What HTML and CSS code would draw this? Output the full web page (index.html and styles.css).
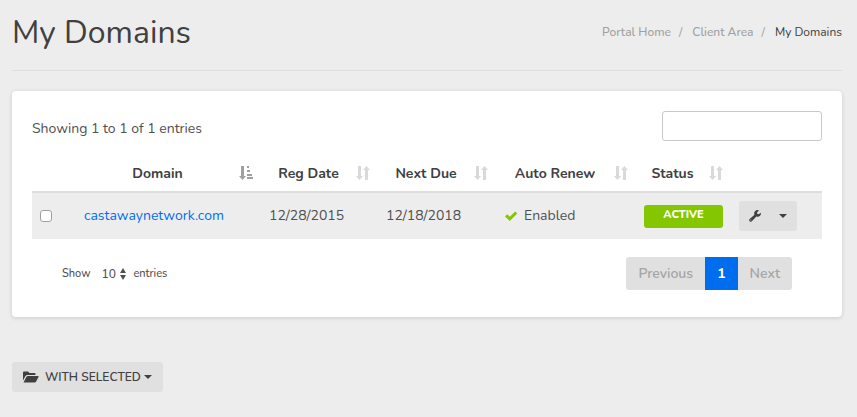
FILE: index.html
```html
<!DOCTYPE html>
<html lang="en">
<head>
    <meta charset="UTF-8">
    <meta name="viewport" content="width=device-width, initial-scale=1.0">
    <title>My Domains</title>
    <link rel="stylesheet" href="styles.css">
</head>
<body>
    <svg class="symbols" aria-hidden="true">
        <symbol id="icon-sort" viewBox="0 0 14 16">
            <path d="M2 1h3v10h2l-3.500 4L0 11h2zM9 15V5H7l3.500-4L14 5h-2v10z"/>
        </symbol>
        <symbol id="icon-sort-asc" viewBox="0 0 14 16">
            <path d="M2 1h3v10h2l-3.500 4L0 11h2zM8 1h2v2H8zM8 5h3v2H8zM8 9h5v2H8zM8 12h6v2H8z"/>
        </symbol>
    </svg>

    <header class="page-header">
        <h1>My Domains</h1>
        <nav class="breadcrumb">
            <a href="#">Portal Home</a>
            <span class="divider">/</span>
            <a href="#">Client Area</a>
            <span class="divider">/</span>
            <span class="current">My Domains</span>
        </nav>
    </header>

    <main>
        <section class="card">
            <div class="card-top">
                <p>Showing 1 to 1 of 1 entries</p>
                <input type="search" class="search" aria-label="Search domains">
            </div>

            <table class="domains">
                <colgroup>
                    <col class="col-check">
                    <col>
                    <col class="col-reg">
                    <col class="col-due">
                    <col class="col-renew">
                    <col class="col-status">
                    <col class="col-actions">
                </colgroup>
                <thead>
                    <tr>
                        <th></th>
                        <th><div class="sort active"><span>Domain</span><svg><use href="#icon-sort-asc"/></svg></div></th>
                        <th><div class="sort"><span>Reg Date</span><svg><use href="#icon-sort"/></svg></div></th>
                        <th><div class="sort"><span>Next Due</span><svg><use href="#icon-sort"/></svg></div></th>
                        <th><div class="sort"><span>Auto Renew</span><svg><use href="#icon-sort"/></svg></div></th>
                        <th><div class="sort"><span>Status</span><svg><use href="#icon-sort"/></svg></div></th>
                        <th></th>
                    </tr>
                </thead>
                <tbody>
                    <tr>
                        <td class="check-cell"><input type="checkbox" aria-label="Select castawaynetwork.com"></td>
                        <td><a href="#">castawaynetwork.com</a></td>
                        <td>12/28/2015</td>
                        <td>12/18/2018</td>
                        <td>
                            <div class="renew">
                                <svg viewBox="0 0 14 12"><path d="M1 6.500L3.200 4.300L5.800 6.800L11.200 1.400L13.300 3.500L5.800 11z"/></svg>
                                <span>Enabled</span>
                            </div>
                        </td>
                        <td class="status-cell"><span class="badge">ACTIVE</span></td>
                        <td>
                            <div class="actions">
                                <button type="button" aria-label="Manage domain">
                                    <svg class="wrench" viewBox="0 0 12 12"><path d="M11.800 2.800L9.700 4.300L8.200 3.800L8 2.400L10 .6A3.200 3.200 0 0 0 5.500 4.700L.7 9a1.400 1.400 0 0 0 2.100 2.200L7.400 6.500A3.200 3.200 0 0 0 11.800 2.800zM1.900 9.500a.5.5 0 1 1 0 1a.5.5 0 0 1 0-1z"/></svg>
                                </button>
                                <button type="button" aria-label="More actions"><span class="caret"></span></button>
                            </div>
                        </td>
                    </tr>
                </tbody>
            </table>

            <div class="card-bottom">
                <div class="length">
                    <label for="length">Show</label>
                    <div class="select-wrap">
                        <select id="length">
                            <option>10</option>
                            <option>25</option>
                            <option>50</option>
                        </select>
                        <svg viewBox="0 0 6 12"><path d="M3 0l3 5H0zM0 7h6l-3 5z"/></svg>
                    </div>
                    <span>entries</span>
                </div>
                <nav class="pagination" aria-label="Pages">
                    <a href="#">Previous</a>
                    <a href="#" class="active">1</a>
                    <a href="#">Next</a>
                </nav>
            </div>
        </section>

        <button type="button" class="with-selected">
            <svg viewBox="0 0 16 12"><path d="M0 9.500V1.500Q0 .5 1 .5H5L6.500 2H11.500Q12.500 2 12.500 3V4H4.500Q3 4 2.300 5.200zM.5 11.500L3.300 6Q3.800 5 5 5H15Q16 5 15.500 6L13 10.700Q12.500 11.500 11.500 11.500z"/></svg>
            <span>WITH SELECTED</span>
            <span class="caret"></span>
        </button>
    </main>
</body>
</html>
```
FILE: styles.css
```css
* {
    box-sizing: border-box;
}
body {
    margin: 0;
    padding: 0 15px 25px 12px;
    background: #ededed;
    color: #505050;
    font-family: Nunito, Lato, sans-serif;
    font-size: 14px;
    line-height: 20px;
}
h1, p {
    margin: 0;
}
a {
    text-decoration: none;
}
button, input, select {
    margin: 0;
    font: inherit;
    color: inherit;
}
.symbols {
    position: absolute;
    width: 0;
    height: 0;
}
svg {
    display: block;
    flex: none;
    fill: currentColor;
}
.page-header {
    display: flex;
    justify-content: space-between;
    align-items: flex-start;
    padding: 12px 0 16px;
    border-bottom: 1px solid #dedede;
    margin-bottom: 20px;
}
h1 {
    font-size: 32px;
    line-height: 42px;
    font-weight: 400;
    color: #404040;
}
.breadcrumb {
    display: flex;
    gap: 8px;
    padding-top: 10px;
    font-size: 12px;
    color: #a0a0a0;
}
.breadcrumb a {
    color: #a0a0a0;
    font-weight: 500;
}
.breadcrumb .divider {
    margin-right: 2px;
}
.breadcrumb .current {
    color: #404040;
}
.card {
    background: #fff;
    border-radius: 4px;
    padding: 20px 20px 27px;
    box-shadow: 0 1px 4px rgba(0, 0, 0, 0.15);
}
.card-top {
    display: flex;
    justify-content: space-between;
    align-items: flex-start;
    margin-bottom: 14px;
}
.card-top p {
    padding-top: 8px;
}
.search {
    width: 160px;
    height: 30px;
    padding: 0 8px;
    border: 1px solid #c8c8c8;
    border-radius: 3px;
    background: #fff;
    appearance: none;
}
.domains {
    width: 100%;
    table-layout: fixed;
    border-collapse: separate;
    border-spacing: 0;
}
.col-check { width: 42px; }
.col-reg { width: 117px; }
.col-due { width: 118px; }
.col-renew { width: 140px; }
.col-status { width: 95px; }
.col-actions { width: 93px; }
.domains th {
    height: 38px;
    padding: 0 6px 0 10px;
    border-bottom: 2px solid #dedede;
    color: #404040;
    font-weight: 700;
}
.domains td {
    height: 46px;
    padding: 0 10px;
    background: #ededed;
}
.domains td a {
    color: #006dee;
}
.sort {
    display: flex;
    align-items: center;
    gap: 8px;
}
.sort span {
    flex: 1;
    padding-top: 2px;
    white-space: nowrap;
}
.sort svg {
    width: 14px;
    height: 16px;
    color: #d9d9d9;
}
.sort.active svg {
    color: #a0a0a0;
}
.domains .check-cell {
    padding: 0 8px;
}
.check-cell input {
    display: block;
    width: 12px;
    height: 12px;
    border: 1px solid #a0a0a0;
    border-radius: 3px;
    background: #fff;
    appearance: none;
}
.renew {
    display: flex;
    align-items: center;
    gap: 6px;
}
.renew svg {
    width: 14px;
    height: 12px;
    color: #84c700;
}
.domains .status-cell {
    padding: 0 6px 0 10px;
}
.badge {
    display: block;
    height: 23px;
    border-radius: 3px;
    background: #84c700;
    color: #fff;
    font-size: 11px;
    line-height: 20px;
    font-weight: 800;
    text-align: center;
}
.actions {
    display: flex;
    width: 58px;
    height: 30px;
    border-radius: 3px;
    background: #e0e0e0;
}
.actions button {
    display: flex;
    flex: 1;
    align-items: center;
    justify-content: center;
    padding: 0;
    border: 0;
    background: none;
    color: #404040;
}
.actions button:first-child {
    padding-left: 2px;
}
.wrench {
    width: 12px;
    height: 12px;
}
.caret {
    border: 4px solid transparent;
    border-top-color: #404040;
    border-bottom: 0;
}
.card-bottom {
    display: flex;
    justify-content: space-between;
    align-items: center;
    padding: 18px 30px 0;
}
.length {
    display: flex;
    align-items: center;
    font-size: 11px;
    font-weight: 500;
}
.select-wrap {
    display: flex;
    align-items: center;
    gap: 4px;
    margin: 0 7px 0 11px;
}
.select-wrap select {
    padding: 0;
    border: 0;
    background: none;
    font-size: 12px;
    appearance: none;
}
.select-wrap svg {
    width: 6px;
    height: 12px;
}
.pagination {
    display: flex;
    border-radius: 3px;
    background: #e0e0e0;
    overflow: hidden;
    font-weight: 600;
}
.pagination a {
    padding: 7px 12px 6px;
    color: #a5a5a5;
}
.pagination .active {
    background: #006dee;
    color: #fff;
    font-weight: 700;
}
.with-selected {
    display: flex;
    align-items: center;
    height: 30px;
    margin-top: 45px;
    padding: 0 11px;
    border: 0;
    border-radius: 3px;
    background: #e0e0e0;
    color: #404040;
    font-size: 12px;
    font-weight: 600;
}
.with-selected svg {
    width: 16px;
    height: 12px;
    margin-right: 6px;
}
.with-selected .caret {
    margin-left: 3px;
}
```
